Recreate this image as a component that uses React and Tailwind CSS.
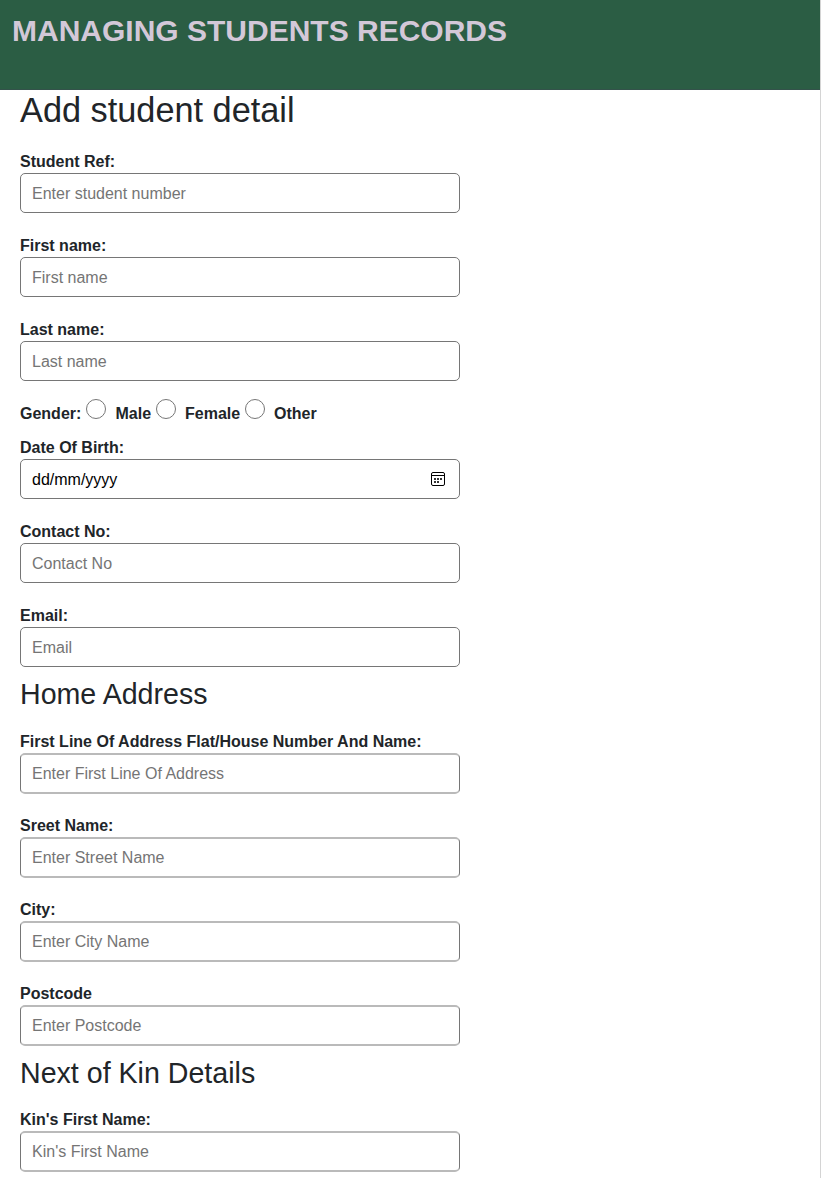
import React from "react";

function Field({ label, placeholder, tall, children }) {
  return (
    <div className="flex w-[440px] flex-col">
      <label className="h-[23px] text-base leading-6 font-bold whitespace-nowrap">{label}</label>
      {children || (
        <input
          placeholder={placeholder}
          className={
            "w-full rounded-[5px] border border-[#767676] bg-white px-[11px] pt-px text-base text-black outline-none placeholder:text-[#757575] " +
            (tall ? "h-[41px] border-y-2 border-y-[#bababa]" : "h-10")
          }
        />
      )}
    </div>
  );
}

function Choice({ label, width }) {
  return (
    <label className={"flex items-start " + width}>
      <input
        type="radio"
        name="gender"
        className="mt-[-3.5px] mr-[9.5px] size-5 shrink-0 appearance-none rounded-full border border-[#767676] bg-white"
      />
      <span className="leading-6">{label}</span>
    </label>
  );
}

function CalendarIcon() {
  return (
    <svg width="14" height="14" viewBox="0 0 14 14" fill="none" stroke="#000">
      <rect x="0.5" y="0.5" width="13" height="13" rx="1.5" />
      <path d="M0.5 3.5h13" />
      <path
        d="M3 7h2M6 7h2M9 7h2M3 10h2M6 10h2"
        stroke="#333"
        strokeWidth="2"
      />
    </svg>
  );
}

export default function App() {
  return (
    <div className="h-[1178px] w-[822px] overflow-hidden bg-white font-['Liberation_Sans',Arial,sans-serif] text-[#212529]">
      <div className="h-full w-[821px] border-r border-[#d4d4d4]">
        <header className="h-[90px] border-b border-[#33524a] bg-[#2b5d44] pt-[13px] pl-3">
          <h1 className="text-[30px] leading-9 font-bold whitespace-nowrap text-[#d3c8d8]">
            MANAGING STUDENTS RECORDS
          </h1>
        </header>
        <main className="px-5">
          <h2 className="h-[60px] text-[34.3px] leading-10 whitespace-nowrap">Add student detail</h2>
          <div className="flex flex-col gap-[21px]">
            <Field label="Student Ref:" placeholder="Enter student number" />
            <Field label="First name:" placeholder="First name" />
            <Field label="Last name:" placeholder="Last name" />
          </div>
          <div className="mt-[21px] flex h-[34px] font-bold whitespace-nowrap">
            <span className="w-[66px] leading-6">Gender:</span>
            <Choice label="Male" width="w-[69.5px]" />
            <Choice label="Female" width="w-[89px]" />
            <Choice label="Other" width="w-[80px]" />
          </div>
          <div className="flex flex-col gap-[21px]">
            <Field label="Date Of Birth:">
              <div className="flex h-10 w-full items-center justify-between rounded-[5px] border border-[#767676] bg-white pr-[14px] pl-[11px] text-black">
                <span className="pt-px">dd/mm/yyyy</span>
                <CalendarIcon />
              </div>
            </Field>
            <Field label="Contact No:" placeholder="Contact No" />
            <Field label="Email:" placeholder="Email" />
          </div>
          <h3 className="h-[63px] pt-[9px] text-[28.6px] leading-[36px]">Home Address</h3>
          <div className="flex flex-col gap-5">
            <Field tall label="First Line Of Address Flat/House Number And Name:" placeholder="Enter First Line Of Address" />
            <Field tall label="Sreet Name:" placeholder="Enter Street Name" />
            <Field tall label="City:" placeholder="Enter City Name" />
            <Field tall label="Postcode" placeholder="Enter Postcode" />
          </div>
          <h3 className="h-[62px] pt-[9px] text-[28.6px] leading-[36px]">Next of Kin Details</h3>
          <Field tall label="Kin's First Name:" placeholder="Kin's First Name" />
        </main>
      </div>
    </div>
  );
}
